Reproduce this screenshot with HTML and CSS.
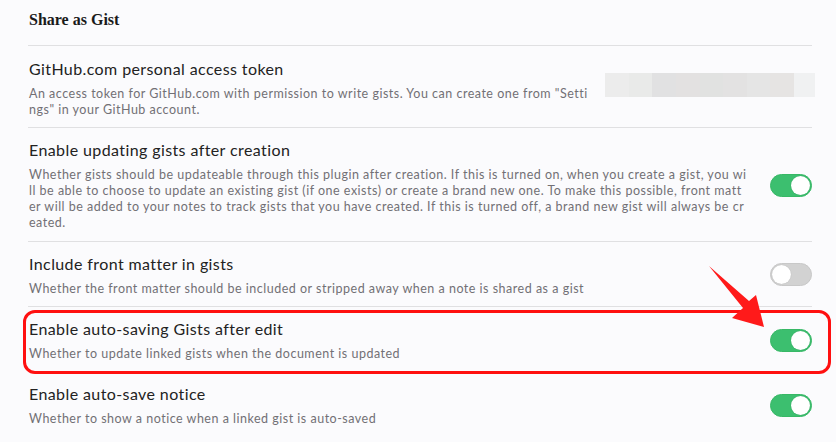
FILE: index.html
```html
<!DOCTYPE html>
<html>
<head>
<meta charset="utf-8">
<link rel="stylesheet" href="styles.css">
</head>
<body>
<div class="page">
  <h2 class="heading">Share as Gist</h2>

  <div class="row first">
    <div class="info">
      <div class="name">GitHub.com personal access token</div>
      <div class="desc"><span>An access token for GitHub.com with permission to write gists. You can create one from "Setti</span><span>ngs" in your GitHub account.</span></div>
    </div>
    <div class="token">
      <i style="background:#ececec"></i><i style="background:#e9eae9"></i><i style="background:#e1e1e2"></i><i style="background:#e3e1e1"></i><i style="background:#e1e2e1"></i><i style="background:#e3e2e2"></i><i style="background:#e5e5e5"></i><i style="background:#e6e4e3"></i><i style="background:#f0f1f2"></i>
    </div>
  </div>

  <div class="row">
    <div class="info">
      <div class="name">Enable updating gists after creation</div>
      <div class="desc"><span>Whether gists should be updateable through this plugin after creation. If this is turned on, when you create a gist, you wi</span><span>ll be able to choose to update an existing gist (if one exists) or create a brand new one. To make this possible, front matt</span><span>er will be added to your notes to track gists that you have created. If this is turned off, a brand new gist will always be cr</span><span>eated.</span></div>
    </div>
    <div class="toggle on"><div class="knob"></div></div>
  </div>

  <div class="row">
    <div class="info">
      <div class="name">Include front matter in gists</div>
      <div class="desc"><span>Whether the front matter should be included or stripped away when a note is shared as a gist</span></div>
    </div>
    <div class="toggle"><div class="knob"></div></div>
  </div>

  <div class="row">
    <div class="info">
      <div class="name">Enable auto-saving Gists after edit</div>
      <div class="desc"><span>Whether to update linked gists when the document is updated</span></div>
    </div>
    <div class="toggle on"><div class="knob"></div></div>
  </div>

  <div class="row last">
    <div class="info">
      <div class="name">Enable auto-save notice</div>
      <div class="desc"><span>Whether to show a notice when a linked gist is auto-saved</span></div>
    </div>
    <div class="toggle on"><div class="knob"></div></div>
  </div>
</div>

<div class="highlight"></div>
<svg class="arrow" width="836" height="442" viewBox="0 0 836 442">
  <polygon points="709,266 749,301 756,295 764,327 732,318 743,308" fill="#ff1a1a"/>
</svg>
</body>
</html>
```

FILE: styles.css
```css
html, body {
  margin: 0;
  padding: 0;
  background: #fbfbfd;
}
body {
  width: 836px;
  height: 442px;
  overflow: hidden;
  position: relative;
  font-family: "Lato", "Open Sans", sans-serif;
}
.page {
  margin-left: 28px;
  width: 784px;
}
.heading {
  margin: 0;
  height: 46px;
  box-sizing: border-box;
  padding-top: 10px;
  font-family: "Liberation Serif", serif;
  font-weight: bold;
  font-size: 16px;
  line-height: 20px;
  color: #1a1a1a;
  border-bottom: 1px solid #e0e0e2;
  padding-left: 1px;
}
.row {
  display: flex;
  align-items: center;
  padding: 11px 0 9px 1px;
  border-bottom: 1px solid #e0e0e2;
}
.row.first {
  padding-top: 12px;
  padding-bottom: 8px;
}
.row.last {
  border-bottom: none;
}
.info {
  flex: 1;
  min-width: 0;
}
.name {
  font-size: 16px;
  line-height: 22px;
  letter-spacing: 0.4px;
  color: #222;
}
.desc {
  margin-top: 6px;
  font-size: 12.5px;
  line-height: 16.3px;
  letter-spacing: 0.5px;
  color: #727075;
  white-space: nowrap;
}
.desc span {
  display: block;
}
.token {
  display: flex;
  height: 24px;
  margin: 0 -3px 6px 0;
}
.token i {
  display: block;
  width: 23.6px;
  height: 24px;
}
.token i:last-child {
  width: 21px;
}
.toggle {
  width: 42px;
  height: 23px;
  border-radius: 12px;
  background: #d2d2d2;
  box-sizing: border-box;
  border: 1px solid #c8c8c8;
  display: flex;
  align-items: center;
  padding: 0 1px;
  flex-shrink: 0;
  margin-left: 15px;
}
.toggle .knob {
  width: 19px;
  height: 19px;
  border-radius: 50%;
  background: #fff;
  box-shadow: 0 0 1px rgba(0,0,0,0.2);
}
.toggle.on {
  background: #3cbf6f;
  border-color: #38b866;
  justify-content: flex-end;
}
.highlight {
  position: absolute;
  left: 23px;
  top: 310px;
  width: 808px;
  height: 64px;
  box-sizing: border-box;
  border: 3px solid #ff1010;
  border-radius: 12px;
}
.arrow {
  position: absolute;
  left: 0;
  top: 0;
}
```
